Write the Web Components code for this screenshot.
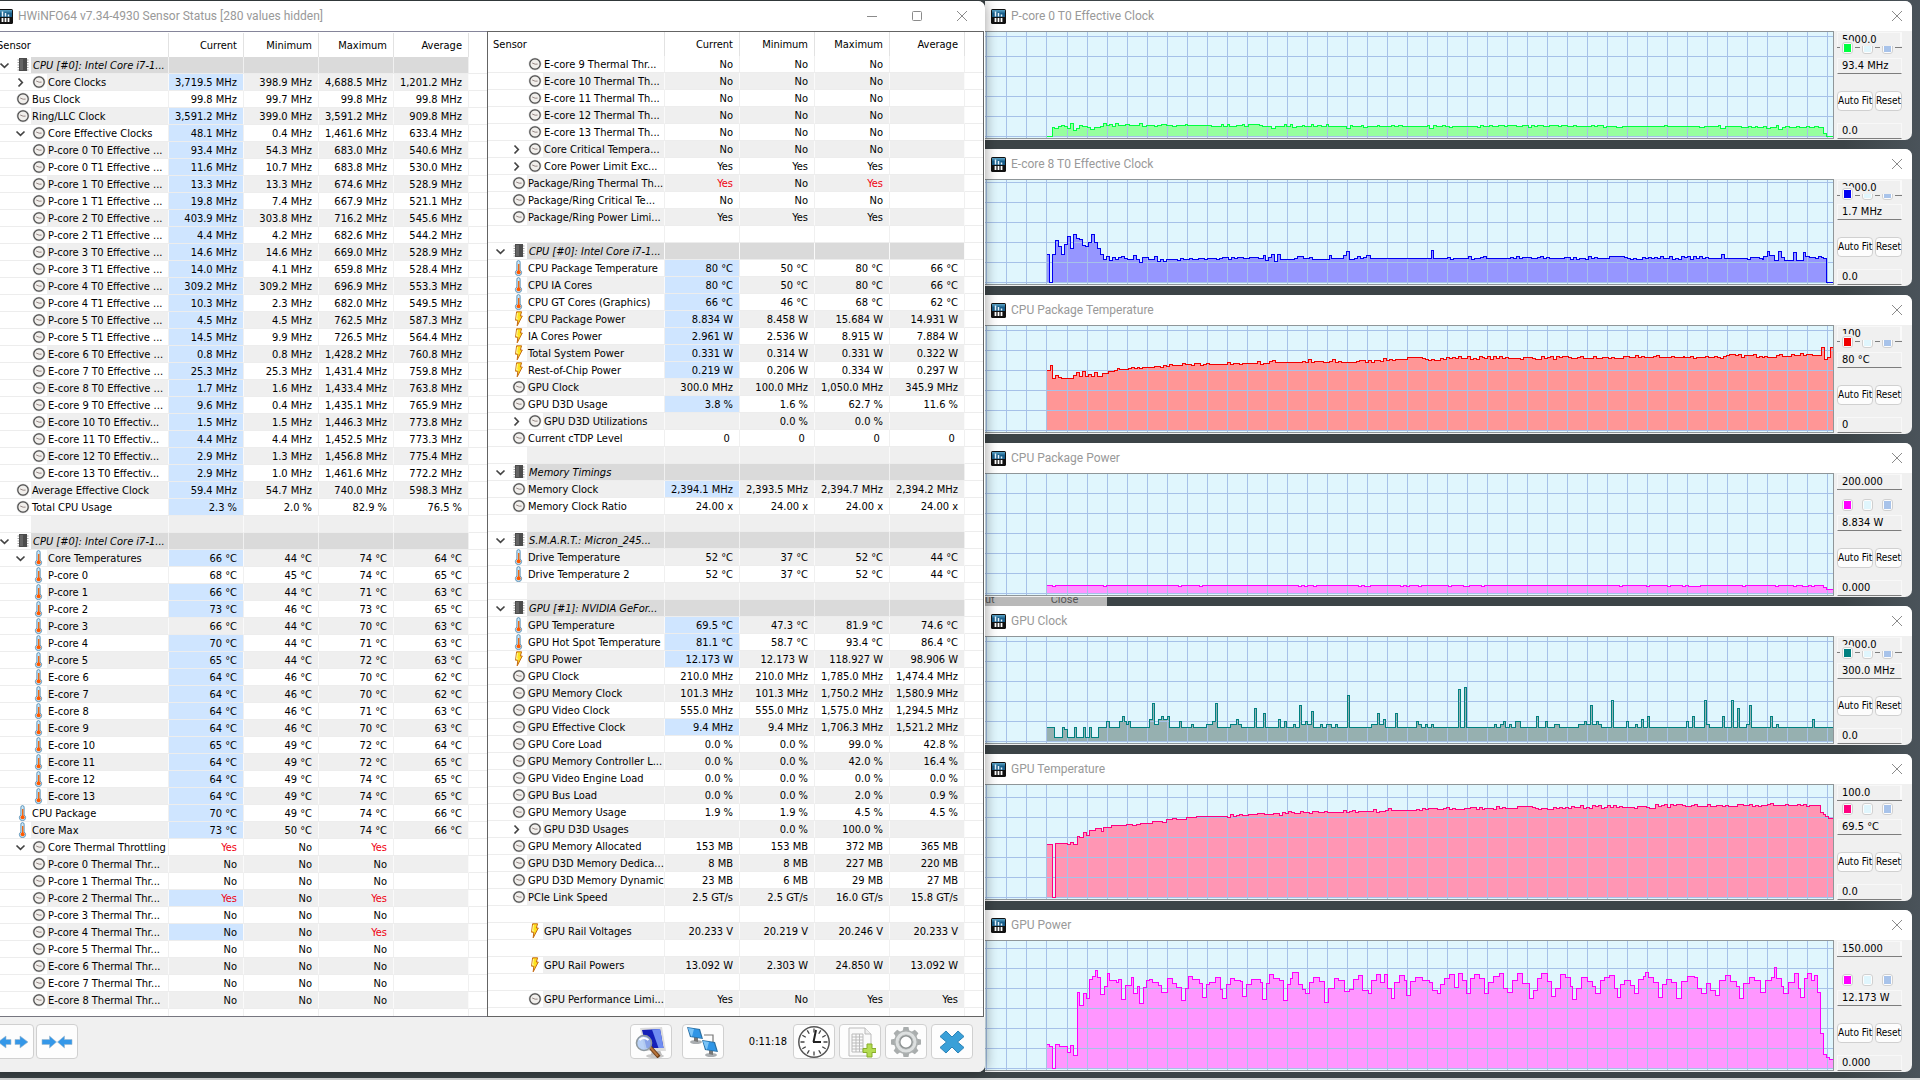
<!DOCTYPE html>
<html lang="en">
<head>
<meta charset="utf-8">
<title>HWiNFO64 Sensor Status</title>
<style>
  body { margin: 0; background: #3d4548; }
</style>
</head>
<body>
<sensor-desktop>
  <app-window slot="main" heading="HWiNFO64 v7.34-4930 Sensor Status [280 values hidden]">
    <sensor-table name="left"></sensor-table>
    <sensor-table name="right" framed></sensor-table>
    <tool-bar slot="footer"></tool-bar>
  </app-window>
  <graph-window heading="P-core 0 T0 Effective Clock" series="pcore" max="5000.0" value="93.4 MHz" min="0.0" plot="108"></graph-window>
  <graph-window heading="E-core 8 T0 Effective Clock" series="ecore" max="2000.0" value="1.7 MHz" min="0.0" plot="106"></graph-window>
  <graph-window heading="CPU Package Temperature" series="cputemp" max="100" value="80 °C" min="0" plot="108"></graph-window>
  <graph-window heading="CPU Package Power" series="cpupower" max="200.000" value="8.834 W" min="0.000" plot="123"></graph-window>
  <peek-strip></peek-strip>
  <graph-window heading="GPU Clock" series="gpuclock" max="2000.0" value="300.0 MHz" min="0.0" plot="108"></graph-window>
  <graph-window heading="GPU Temperature" series="gputemp" max="100.0" value="69.5 °C" min="0.0" plot="116"></graph-window>
  <graph-window heading="GPU Power" series="gpupower" max="150.000" value="12.173 W" min="0.000" plot="131"></graph-window>
</sensor-desktop>

<script>
const UI_FONT = '"DejaVu Sans Condensed", Tahoma, "Noto Sans", sans-serif';
const TITLE_FONT = 'Roboto, "Segoe UI", "Open Sans", sans-serif';

/* ---------- small drawings ---------- */
const ICONS = {
  c: `<svg viewBox="0 0 16 16" width="16" height="16"><circle cx="8" cy="8" r="6.3" fill="#c9c9c9"/><circle cx="8" cy="8" r="5.2" fill="#f1efec" stroke="#4c4c4c" stroke-width="1.2"/><path d="M5.200 7l3 1.200 2.400-.1" fill="none" stroke="#8b7b78" stroke-width=".9"/></svg>`,
  t: `<svg viewBox="0 0 16 16" width="16" height="16"><path d="M5.9 2.2Q5.9.6 7.5.6T9.1 2.2V10q1.5 1 1.5 2.5a3.1 3.1 0 0 1-6.2 0Q4.4 11 5.9 10z" fill="#cfe8f8" stroke="#5b93b8"/><path d="M7 4h1.4v7H7z" fill="#f26a13"/><circle cx="7.6" cy="12.2" r="2" fill="#ff5a00"/></svg>`,
  p: `<svg viewBox="0 0 16 16" width="16" height="16"><path d="M5.6.8h5L9.3 5h2L6.2 14.8l.6-5.6H4.6z" fill="#ffe11c" stroke="#c56a16" stroke-width="1"/><path d="M6.4 2l-.8 6h1.6" fill="none" stroke="#fff8a8"/></svg>`,
  g: `<svg viewBox="0 0 16 16" width="16" height="16"><path d="M2.500 3h11M2.500 5.500h11M2.500 8h11M2.500 10.500h11M2.500 13h11" stroke="#a5a5a5"/><path d="M4 1h8v13H4z" fill="#4c4c4c"/><path d="M5 2h3v11H5z" fill="#656565"/></svg>`,
  down: `<svg viewBox="0 0 21 16" width="21" height="16"><path d="M6.500 6.500l4 3.800 4-3.800" fill="none" stroke="#444" stroke-width="1.700"/></svg>`,
  right: `<svg viewBox="0 0 21 16" width="21" height="16"><path d="M8.500 4.500l3.800 4-3.800 4" fill="none" stroke="#444" stroke-width="1.700"/></svg>`
};
const LOGO = `<svg viewBox="0 0 15 15" width="15" height="15"><defs><linearGradient id="a" x2="0" y2="1"><stop offset="0" stop-color="#5ba5c8"/><stop offset=".5" stop-color="#1a5f8b"/></linearGradient></defs><rect width="15" height="15" rx="1.500" fill="#111"/><path d="M1 1h13v7H1z" fill="url(#a)"/><path d="M4.500 2.500v5M7.500 4v3.500M10.500 5.500v2" stroke="#e9f6ff" stroke-width="1.500"/><path d="M4.500 9v4M7.500 9v4M10.500 9v4" stroke="#fff" stroke-width="1.800"/></svg>`;

const DIALS = Array.from({ length: 12 }, (_, i) => `<path d="M16 2.500v4" transform="rotate(${i * 30} 16 16)" stroke="#444" stroke-width="1.300"/>`).join('');
const TEETH = Array.from({ length: 8 }, (_, i) => `<path d="M12.500 6l1-5h5l1 5z" transform="rotate(${i * 45} 16 16)" fill="#a9adad"/>`).join('');
const screen = (x, y) => `<g transform="translate(${x} ${y})"><ellipse cx="9" cy="16" rx="6" ry="2" fill="#a9adb0"/><path d="M7 11l4 1v4l-4-1z" fill="#777"/><path d="M0 1l13 2 3 10-13-2z" fill="#2a6d9f"/><path d="M1 2l11 1.800 2.600 8.200L4 10.200z" fill="#2f95e6"/><path d="M1 2l6 1-2 7.500L4 10.200z" fill="#79c3f7"/></g>`;
const TOOLS = {
  expand: `<path d="M1 16l8-6v3.500h5v5H9V22z M31 16l-8-6v3.500h-5v5h5V22z" fill="#3497e8" stroke="#9fb9cc" stroke-width=".6"/>`,
  shrink: `<path d="M15.500 16l-7-6v3.500H1v5h7.500V22z M16.500 16l7-6v3.500H31v5h-7.500V22z" fill="#3497e8" stroke="#9fb9cc" stroke-width=".6"/>`,
  inspect: `<ellipse cx="20" cy="30" rx="9" ry="2" fill="#c8c8c8"/><path d="M17 24h8l2 5H16z" fill="#bbb"/><path d="M5 2l22-1 4 24-21 0z" fill="#dcdcdc"/><path d="M7 4l18-1 3.500 19-17 0z" fill="#1420b8"/><path d="M17 3.500l8-.5 3.500 19-5 0z" fill="#6f8df2"/><path d="M15 21l9 10" stroke="#6d3d16" stroke-width="4"/><path d="M15 21l8 9" stroke="#b8743a" stroke-width="2"/><circle cx="9" cy="17" r="7.500" fill="#a7c6f4" fill-opacity=".8" stroke="#8f999f" stroke-width="1.600"/><path d="M4.500 14q4-4 9 0" fill="none" stroke="#fff" stroke-width="2"/>`,
  network: `<path d="M17 9h9v8" fill="none" stroke="#777" stroke-width="1.200"/>${screen(0, 0)}${screen(15, 13)}`,
  clock: `<circle cx="16" cy="16" r="15.200" fill="#fff" stroke="#555" stroke-width="1.500"/>${DIALS}<path d="M15.500 16L18 4M15 16h8" stroke="#222" stroke-width="2"/>`,
  report: `<path d="M5 2h16l6 6v22H5z" fill="#fafafa" stroke="#bbb"/><path d="M21 2v6h6" fill="#eee" stroke="#bbb"/><path d="M8 8h11v18H8zM8 11h11M8 14h11M8 17h11M8 20h11M8 23h11M12 8v18M15.500 8v18" fill="none" stroke="#bbb"/><path d="M23 18h5v4.500h4v4h-4V31h-5v-4.500h-4v-4h4z" fill="#b4dc52" stroke="#87ad2b"/>`,
  settings: `${TEETH}<circle cx="16" cy="16" r="9.500" fill="none" stroke="#adb1b1" stroke-width="5"/><circle cx="16" cy="16" r="9" fill="none" stroke="#dde0e0" stroke-width="3"/><circle cx="16" cy="16" r="6.200" fill="#fff" stroke="#8f9494" stroke-width="1.500"/>`,
  close: `<path d="M10 5l6 6 6-6 6 5.500-6.500 5.500 6.500 5.500-6 5.500-6-6-6 6-6-5.500 6.500-5.500L4 10.500z" fill="#3aa0d8" stroke="#2a83b8"/>`
};

/* ---------- sensor readings ----------
   level + icon + arrow + change mark | name | current | minimum | maximum | average */
const READINGS = {
left: `0gv-|CPU [#0]: Intel Core i7-1...||||
2c>*|Core Clocks|3,719.5 MHz|398.9 MHz|4,688.5 MHz|1,201.2 MHz
1c--|Bus Clock|99.8 MHz|99.7 MHz|99.8 MHz|99.8 MHz
1c-*|Ring/LLC Clock|3,591.2 MHz|399.0 MHz|3,591.2 MHz|909.8 MHz
2cv*|Core Effective Clocks|48.1 MHz|0.4 MHz|1,461.6 MHz|633.4 MHz
2c-*|P-core 0 T0 Effective ...|93.4 MHz|54.3 MHz|683.0 MHz|540.6 MHz
2c-*|P-core 0 T1 Effective ...|11.6 MHz|10.7 MHz|683.8 MHz|530.0 MHz
2c-*|P-core 1 T0 Effective ...|13.3 MHz|13.3 MHz|674.6 MHz|528.9 MHz
2c-*|P-core 1 T1 Effective ...|19.8 MHz|7.4 MHz|667.9 MHz|521.1 MHz
2c-*|P-core 2 T0 Effective ...|403.9 MHz|303.8 MHz|716.2 MHz|545.6 MHz
2c-*|P-core 2 T1 Effective ...|4.4 MHz|4.2 MHz|682.6 MHz|544.2 MHz
2c-*|P-core 3 T0 Effective ...|14.6 MHz|14.6 MHz|669.0 MHz|528.9 MHz
2c-*|P-core 3 T1 Effective ...|14.0 MHz|4.1 MHz|659.8 MHz|528.4 MHz
2c-*|P-core 4 T0 Effective ...|309.2 MHz|309.2 MHz|696.9 MHz|553.3 MHz
2c-*|P-core 4 T1 Effective ...|10.3 MHz|2.3 MHz|682.0 MHz|549.5 MHz
2c-*|P-core 5 T0 Effective ...|4.5 MHz|4.5 MHz|762.5 MHz|587.3 MHz
2c-*|P-core 5 T1 Effective ...|14.5 MHz|9.9 MHz|726.5 MHz|564.4 MHz
2c-*|E-core 6 T0 Effective ...|0.8 MHz|0.8 MHz|1,428.2 MHz|760.8 MHz
2c-*|E-core 7 T0 Effective ...|25.3 MHz|25.3 MHz|1,431.4 MHz|759.8 MHz
2c-*|E-core 8 T0 Effective ...|1.7 MHz|1.6 MHz|1,433.4 MHz|763.8 MHz
2c-*|E-core 9 T0 Effective ...|9.6 MHz|0.4 MHz|1,435.1 MHz|765.9 MHz
2c-*|E-core 10 T0 Effectiv...|1.5 MHz|1.5 MHz|1,446.3 MHz|773.8 MHz
2c-*|E-core 11 T0 Effectiv...|4.4 MHz|4.4 MHz|1,452.5 MHz|773.3 MHz
2c-*|E-core 12 T0 Effectiv...|2.9 MHz|1.3 MHz|1,456.8 MHz|775.4 MHz
2c-*|E-core 13 T0 Effectiv...|2.9 MHz|1.0 MHz|1,461.6 MHz|772.2 MHz
1c-*|Average Effective Clock|59.4 MHz|54.7 MHz|740.0 MHz|598.3 MHz
1c-*|Total CPU Usage|2.3 %|2.0 %|82.9 %|76.5 %

0gv-|CPU [#0]: Intel Core i7-1...||||
2tv*|Core Temperatures|66 °C|44 °C|74 °C|64 °C
2t--|P-core 0|68 °C|45 °C|74 °C|65 °C
2t-*|P-core 1|66 °C|44 °C|71 °C|63 °C
2t-*|P-core 2|73 °C|46 °C|73 °C|65 °C
2t--|P-core 3|66 °C|44 °C|70 °C|63 °C
2t-*|P-core 4|70 °C|44 °C|71 °C|63 °C
2t-*|P-core 5|65 °C|44 °C|72 °C|63 °C
2t-*|E-core 6|64 °C|46 °C|70 °C|62 °C
2t-*|E-core 7|64 °C|46 °C|70 °C|62 °C
2t-*|E-core 8|64 °C|46 °C|71 °C|63 °C
2t-*|E-core 9|64 °C|46 °C|70 °C|63 °C
2t-*|E-core 10|65 °C|49 °C|72 °C|64 °C
2t-*|E-core 11|64 °C|49 °C|72 °C|65 °C
2t-*|E-core 12|64 °C|49 °C|74 °C|65 °C
2t-*|E-core 13|64 °C|49 °C|74 °C|65 °C
1t-*|CPU Package|70 °C|49 °C|74 °C|66 °C
1t-*|Core Max|73 °C|50 °C|74 °C|66 °C
2cv-|Core Thermal Throttling|!Yes|No|!Yes|
2c--|P-core 0 Thermal Thr...|No|No|No|
2c--|P-core 1 Thermal Thr...|No|No|No|
2c-*|P-core 2 Thermal Thr...|!Yes|No|!Yes|
2c--|P-core 3 Thermal Thr...|No|No|No|
2c-*|P-core 4 Thermal Thr...|No|No|!Yes|
2c--|P-core 5 Thermal Thr...|No|No|No|
2c--|E-core 6 Thermal Thr...|No|No|No|
2c--|E-core 7 Thermal Thr...|No|No|No|
2c--|E-core 8 Thermal Thr...|No|No|No|`,
right: `2c--|E-core 9 Thermal Thr...|No|No|No|
2c--|E-core 10 Thermal Th...|No|No|No|
2c--|E-core 11 Thermal Th...|No|No|No|
2c--|E-core 12 Thermal Th...|No|No|No|
2c--|E-core 13 Thermal Th...|No|No|No|
2c>-|Core Critical Tempera...|No|No|No|
2c>-|Core Power Limit Exc...|Yes|Yes|Yes|
1c--|Package/Ring Thermal Th...|!Yes|No|!Yes|
1c--|Package/Ring Critical Te...|No|No|No|
1c--|Package/Ring Power Limi...|Yes|Yes|Yes|

0gv-|CPU [#0]: Intel Core i7-1...||||
1t-*|CPU Package Temperature|80 °C|50 °C|80 °C|66 °C
1t-*|CPU IA Cores|80 °C|50 °C|80 °C|66 °C
1t-*|CPU GT Cores (Graphics)|66 °C|46 °C|68 °C|62 °C
1p-*|CPU Package Power|8.834 W|8.458 W|15.684 W|14.931 W
1p-*|IA Cores Power|2.961 W|2.536 W|8.915 W|7.884 W
1p-*|Total System Power|0.331 W|0.314 W|0.331 W|0.322 W
1p-*|Rest-of-Chip Power|0.219 W|0.206 W|0.334 W|0.297 W
1c--|GPU Clock|300.0 MHz|100.0 MHz|1,050.0 MHz|345.9 MHz
1c-*|GPU D3D Usage|3.8 %|1.6 %|62.7 %|11.6 %
2c>-|GPU D3D Utilizations||0.0 %|0.0 %|
1c--|Current cTDP Level|0 |0 |0 |0 

0gv-|Memory Timings||||
1c-*|Memory Clock|2,394.1 MHz|2,393.5 MHz|2,394.7 MHz|2,394.2 MHz
1c--|Memory Clock Ratio|24.00 x|24.00 x|24.00 x|24.00 x

0gv-|S.M.A.R.T.: Micron_245...||||
1t--|Drive Temperature|52 °C|37 °C|52 °C|44 °C
1t--|Drive Temperature 2|52 °C|37 °C|52 °C|44 °C

0gv-|GPU [#1]: NVIDIA GeFor...||||
1t-*|GPU Temperature|69.5 °C|47.3 °C|81.9 °C|74.6 °C
1t-*|GPU Hot Spot Temperature|81.1 °C|58.7 °C|93.4 °C|86.4 °C
1p-*|GPU Power|12.173 W|12.173 W|118.927 W|98.906 W
1c--|GPU Clock|210.0 MHz|210.0 MHz|1,785.0 MHz|1,474.4 MHz
1c--|GPU Memory Clock|101.3 MHz|101.3 MHz|1,750.2 MHz|1,580.9 MHz
1c--|GPU Video Clock|555.0 MHz|555.0 MHz|1,575.0 MHz|1,294.5 MHz
1c-*|GPU Effective Clock|9.4 MHz|9.4 MHz|1,706.3 MHz|1,521.2 MHz
1c--|GPU Core Load|0.0 %|0.0 %|99.0 %|42.8 %
1c--|GPU Memory Controller L...|0.0 %|0.0 %|42.0 %|16.4 %
1c--|GPU Video Engine Load|0.0 %|0.0 %|0.0 %|0.0 %
1c--|GPU Bus Load|0.0 %|0.0 %|2.0 %|0.9 %
1c--|GPU Memory Usage|1.9 %|1.9 %|4.5 %|4.5 %
2c>-|GPU D3D Usages||0.0 %|100.0 %|
1c--|GPU Memory Allocated|153 MB|153 MB|372 MB|365 MB
1c--|GPU D3D Memory Dedica...|8 MB|8 MB|227 MB|220 MB
1c--|GPU D3D Memory Dynamic|23 MB|6 MB|29 MB|27 MB
1c--|PCIe Link Speed|2.5 GT/s|2.5 GT/s|16.0 GT/s|15.8 GT/s

2p--|GPU Rail Voltages|20.233 V|20.219 V|20.246 V|20.233 V

2p--|GPU Rail Powers|13.092 W|2.303 W|24.850 W|13.092 W

2c--|GPU Performance Limi...|Yes|No|Yes|Yes`
};

/* ---------- graph histories: x:height steps, ~x:height:swing marks a noisy trend ---------- */
const HISTORY = {
  pcore: { line: '#00ff40', fill: '#96ff9f', data: '62:0 68:9 70:8 74:10 77:11 80:10 83:8 86:13 89:6 92:8 95:11 98:10 103:9 106:7 110:9 116:10 119:13 122:11 125:12 128:10 131:13 134:11 141:12 145:11 155:13 158:10 162:11 170:10 173:11 177:12 182:11 188:10 192:11 201:12 203:11 227:10 237:12 239:10 243:12 245:10 252:11 258:12 260:10 264:12 275:11 278:10 287:8 291:10 300:12 302:10 306:12 308:9 312:10 318:11 320:10 327:12 329:10 333:11 337:10 342:12 344:10 362:8 366:11 368:10 377:11 379:9 383:10 393:11 395:10 407:11 410:10 414:11 418:10 443:11 445:8 449:11 452:10 458:11 461:10 465:9 468:10 ~490:10:1 ~625:10:1 632:9 638:10 680:11 683:10 715:9 720:10 734:11 736:8 741:10 757:9 764:10 767:9 771:10 773:9 779:10 782:8 786:9 792:11 794:7 798:9 801:10 805:9 812:10 815:9 822:10 825:9 830:10 834:9 839:3 842:0' },
  ecore: { line: '#0000f0', fill: '#9696ff', data: '62:28 65:0 68:28 71:42 74:36 77:28 80:38 83:46 86:34 89:48 92:44 95:43 98:37 101:36 104:40 107:48 110:40 113:34 116:28 119:23 122:26 125:22 128:25 131:23 134:25 137:26 140:24 143:23 149:27 152:23 155:20 158:25 164:23 170:26 173:21 176:23 179:21 182:23 ~190:23:1 ~276:24:2 279:27 281:22 284:25 287:28 290:21 293:28 296:23 ~310:24:2 ~343:23:2 345:27 347:24 359:27 362:31 365:23 ~370:24:2 382:27 386:24 ~445:24:2 447:32 449:24 ~460:24:2 ~735:24:2 737:28 740:24 ~760:24:1 779:26 783:31 785:27 790:22 794:31 797:25 800:22 809:30 812:22 819:30 821:26 825:25 ~828:25:1 839:24 842:0' },
  cputemp: { line: '#f00000', fill: '#ff9696', data: '62:60 66:65 68:52 71:55 74:53 77:52 89:55 92:58 95:54 98:59 101:54 104:56 107:54 110:58 113:54 ~118:57:1 ~135:61:2 ~155:62:2 ~195:65:2 ~240:66:2 ~300:68:3 ~360:68:2 ~420:71:2 ~500:72:2 ~600:72:2 ~700:73:2 ~780:74:2 ~834:75:1 837:83 840:71 843:73 846:83' },
  cpupower: { line: '#ff00ff', fill: '#ff96ff', data: '62:8 ~65:8:0 ~835:8:0 839:6 842:4' },
  gpuclock: { line: '#008080', fill: '#96b0b0', data: '62:14 70:4 78:14 80:12 83:4 90:14 92:4 99:14 101:4 105:14 107:4 114:14 122:20 125:14 135:20 138:25 140:20 142:17 144:20 146:14 165:22 168:38 170:17 174:22 177:25 179:22 183:25 185:14 195:20 197:14 207:17 209:14 222:17 228:20 231:38 233:14 246:17 252:22 254:17 257:14 270:33 272:14 279:28 281:14 294:22 296:14 300:20 302:14 309:17 311:14 315:36 317:17 321:20 323:17 327:30 329:14 336:17 338:14 342:17 347:14 351:17 353:14 363:46 365:14 387:17 393:28 395:17 399:22 401:14 411:28 413:14 432:20 434:17 437:14 441:17 443:14 447:17 449:14 474:52 476:14 480:54 482:14 510:17 512:14 516:17 519:20 521:14 525:17 527:14 531:20 536:14 552:25 554:14 561:20 563:14 570:17 575:14 594:17 600:20 602:17 606:36 608:17 612:20 614:17 617:14 627:41 629:14 642:20 644:14 651:17 653:14 657:22 659:14 663:25 665:14 702:20 704:14 708:25 710:14 720:41 722:17 725:14 738:25 740:14 747:41 749:14 753:33 755:14 762:17 765:36 767:14 786:25 788:14 792:17 794:14 828:22 830:14' },
  gputemp: { line: '#ff0080', fill: '#ff96b4', data: '62:53 68:0 71:54 83:53 86:55 89:53 93:61 95:60 99:65 102:62 105:67 111:69 117:66 119:70 127:72 142:73 148:72 152:73 156:74 168:76 178:75 182:78 188:79 192:78 202:80 212:81 ~240:81:2 ~280:83:2 ~350:85:2 ~420:87:2 ~500:89:2 ~560:89:2 ~620:90:2 ~720:91:2 ~833:92:2 836:85 839:83 841:81 844:79' },
  gpupower: { line: '#ff00ff', fill: '#ff96ff', data: '62:24 65:22 68:0 71:24 75:22 83:16 86:23 89:13 93:76 95:63 99:75 102:70 105:89 108:92 111:98 113:91 116:74 120:82 123:95 125:88 132:86 134:89 137:69 141:83 147:91 149:75 153:82 155:65 159:81 162:88 165:89 168:86 174:83 177:76 183:90 188:85 192:81 197:68 201:80 204:92 208:89 215:85 218:71 222:84 225:86 231:91 236:79 238:70 242:84 246:90 250:88 256:87 258:72 262:84 267:89 276:86 278:69 282:85 285:94 289:90 295:88 299:68 303:84 306:90 308:96 314:84 318:79 321:75 325:86 329:91 335:87 340:66 344:80 350:90 354:88 360:77 365:79 369:89 374:93 378:78 384:75 387:88 392:94 396:86 400:94 403:80 407:70 410:86 415:93 420:88 422:73 426:87 431:91 438:88 445:86 448:78 453:75 456:84 460:90 465:94 470:81 474:95 478:88 482:75 486:90 490:94 495:90 500:75 504:86 509:92 515:95 519:80 523:76 528:88 533:95 538:85 545:70 549:78 553:90 557:95 563:87 567:72 571:80 576:94 581:91 586:82 588:69 592:80 597:91 603:87 608:82 611:75 616:88 620:91 625:93 630:80 633:71 636:84 640:88 646:83 650:75 654:89 659:92 661:96 664:91 669:86 674:71 678:84 682:89 687:86 692:70 697:87 703:92 710:91 713:80 717:75 722:85 726:78 731:73 735:88 741:93 746:87 752:82 755:70 759:85 765:91 770:88 776:76 781:88 787:91 790:101 792:90 797:82 799:75 804:86 810:95 814:80 816:71 820:90 823:95 827:88 830:93 833:76 836:35 839:14 842:11 845:9' }
};

/* Expand the compact notation into [x, height] steps. */
function expandHistory(text) {
  let seed = 7;
  const random = () => (seed = (seed * 16807) % 2147483647) / 2147483647;
  const steps = [];
  const tokens = text.split(' ').map(t => ({ noisy: t[0] === '~', v: t.replace('~', '').split(':').map(Number) }));
  tokens.forEach((token, i) => {
    const [x, h, swing] = token.v;
    steps.push([x, h]);
    const next = tokens[i + 1];
    if (!token.noisy || !next) return;
    const target = next.noisy ? next.v[1] : h;
    for (let px = x + 3; px < next.v[0]; px += 3) {
      const trend = h + (target - h) * (px - x) / (next.v[0] - x);
      const r = random();
      const jitter = r > 0.88 ? swing : r > 0.6 ? Math.min(1, swing) : r < 0.12 ? -1 : 0;
      steps.push([px, Math.round(trend + jitter)]);
    }
  });
  return steps;
}

function define(name, css, render) {
  customElements.define(name, class extends HTMLElement {
    connectedCallback() {
      if (this.shadowRoot) return;
      const root = this.attachShadow({ mode: 'open' });
      root.innerHTML = `<style>:host,*{box-sizing:border-box}${css}</style>${render(this)}`;
    }
  });
}

define('sensor-desktop', `
  :host { display: flex; flex-direction: column; min-height: 100vh; overflow: hidden; font: 11px/16px ${UI_FONT}; color: #000; }
  .desk { flex: 1; display: grid; grid-template-columns: 985fr 935fr; align-items: start; padding-top: 1px; background: linear-gradient(90deg, #3c4447 96%, #4a535a); }
  .main { margin-left: -8px; min-width: 0; position: relative; z-index: 1; }
  .graphs { padding-right: 8px; min-width: 0; }
  ::slotted(graph-window:not(:nth-child(2)):not(:nth-child(7))) { margin-top: 9px; }
  .taskline { height: 2px; background: #d8dada; }
`, () => `<div class="desk"><div class="main"><slot name="main"></slot></div><div class="graphs"><slot></slot></div></div><div class="taskline"></div>`);

define('title-bar', `
  :host { display: flex; align-items: center; height: 30px; padding: 0 7px 0 6px; gap: 5px; background: #fff; }
  h1 { flex: 1; margin: 0; font: 400 12px/18px ${TITLE_FONT}; color: #999; white-space: nowrap; }
  svg { display: block; }
  .controls { display: flex; gap: 29px; }
  button { width: 16px; height: 16px; padding: 0; border: 0; background: none; }
  button svg { fill: none; stroke: #8b8b8b; }
`, el => {
  const extra = el.hasAttribute('resizable')
    ? `<button aria-label="Minimize"><svg width="16" height="16"><path d="M3 8.500h10"/></svg></button><button aria-label="Maximize"><svg width="16" height="16"><rect x="3.500" y="3.500" width="9" height="9" rx="1"/></svg></button>` : '';
  return `${LOGO}<h1>${el.getAttribute('heading')}</h1><div class="controls">${extra}<button aria-label="Close"><svg width="16" height="16"><path d="M3 3l10 10M13 3L3 13"/></svg></button></div>`;
});

define('app-window', `
  :host { display: block; background: #f0f0f0; border-radius: 0 7px 7px 0; overflow: hidden; box-shadow: 0 0 14px rgba(0,0,0,.4); }
  title-bar { padding: 0 15px 0 6px; }
  .panes { display: grid; grid-template-columns: 495fr 498fr; background: #fff; }
`, el => `<title-bar resizable heading="${el.getAttribute('heading')}"></title-bar><div class="panes"><slot></slot></div><slot name="footer"></slot>`);

define('sensor-table', `
  :host { display: block; min-width: 0; height: 986px; overflow: hidden; border-top: 1px solid #85859a; border-bottom: 1px solid #76767f; padding-top: 1px; background: #fff; }
  :host([framed]) { border: 1px solid #646464; margin-right: 1px; padding-top: 0; }
  table { width: 100%; table-layout: fixed; border-collapse: separate; border-spacing: 0; line-height: 14px; }
  .wide { width: 177px; } .col { width: 75px; }
  th { height: 24px; padding: 2px 6px 0 5px; font-weight: 400; text-align: right; border-right: 1px solid #e2e2e2; }
  th:first-child { text-align: left; }
  th:last-child, td:last-child { border-right: 0; }
  td { height: 17px; padding: 2px 6px 0 0; text-align: right; white-space: pre; border-right: 1px solid #f0f0f0; border-bottom: 1px solid #ededed; }
  td:first-child { padding: 0; text-align: left; }
  .odd td:not(:first-child):not(:last-child), .odd .name { background: #efefef; }
  .odd td { border-right-color: #fafafa; }
  tr.group td:not(:first-child):not(:last-child), tr.group .name { background: #dadada; }
  tr.group .name { font-style: italic; padding-left: 2px; }
  tr td.changed.changed.changed { background: #cfe5ff; }
  .red { color: #f00010; }
  .cell { display: flex; height: 16px; overflow: hidden; }
  .lead { width: 23px; flex: none; display: flex; justify-content: flex-end; }
  .deep .lead { width: 39px; }
  .icon { width: 16px; flex: none; }
  .name { flex: 1; min-width: 0; overflow: hidden; padding: 2px 0 0 1px; }
  svg { display: block; }
`, el => {
  const rows = READINGS[el.getAttribute('name')].split('\n').map((line, i) => {
    const [code, name = '', ...values] = line.split('|');
    const [level, icon, arrow, mark] = code;
    const cls = [i % 2 ? 'odd' : '', level === '0' ? 'group' : '', level === '2' ? 'deep' : ''].join(' ').trim();
    const chevron = arrow === 'v' ? ICONS.down : arrow === '>' ? ICONS.right : '';
    const cells = [0, 1, 2, 3].map(n => {
      const v = values[n] || '';
      const c = [n === 0 && mark === '*' ? 'changed' : '', v[0] === '!' ? 'red' : ''].join(' ').trim();
      return `<td${c ? ` class="${c}"` : ''}>${v.replace('!', '')}</td>`;
    }).join('');
    return `<tr class="${cls}"><td><div class="cell"><span class="lead">${chevron}</span><span class="icon">${ICONS[icon] || ''}</span><span class="name">${name}</span></div></td>${cells}<td></td></tr>`;
  }).join('');
  return `<table><colgroup><col class="wide"><col class="col"><col class="col"><col class="col"><col class="col"><col></colgroup>
    <thead><tr><th>Sensor</th><th>Current</th><th>Minimum</th><th>Maximum</th><th>Average</th><th></th></tr></thead><tbody>${rows}<tr><td></td><td></td><td></td><td></td><td></td><td></td></tr></tbody></table>`;
});

define('tool-button', `
  :host { display: block; }
  button { display: block; width: 42px; height: 35px; padding: 0 4px; border: 1px solid #d0d0d0; border-radius: 4px; background: #fdfdfd; }
  svg { display: block; }
`, el => `<button aria-label="${el.getAttribute('icon')}"><svg viewBox="0 0 32 32" width="32" height="32">${TOOLS[el.getAttribute('icon')]}</svg></button>`);

define('tool-bar', `
  :host { display: flex; align-items: flex-start; justify-content: space-between; height: 55px; padding: 7px 12px 0 0; background: #f0f0f0; }
  div { display: flex; align-items: center; gap: 4px; }
  .sizing { gap: 2px; }
  .pair { display: flex; gap: 10px; margin-right: 21px; }
  time { margin-right: 2px; }
`, () => `<div class="sizing"><tool-button icon="expand"></tool-button><tool-button icon="shrink"></tool-button></div>
  <div><span class="pair"><tool-button icon="inspect"></tool-button><tool-button icon="network"></tool-button></span><time>0:11:18</time>
  <tool-button icon="clock"></tool-button><tool-button icon="report"></tool-button><tool-button icon="settings"></tool-button><tool-button icon="close"></tool-button></div>`);

define('history-plot', `
  :host { display: block; border-top: 1px solid #8f9699; border-right: 1px solid #8f9699; border-bottom: 1px solid #8f9699; background: #e0f6fd; overflow: hidden; }
  svg { display: block; width: 100%; height: 100%; shape-rendering: crispEdges; }
`, el => {
  const { line, fill, data } = HISTORY[el.getAttribute('series')];
  const height = Number(el.getAttribute('height')) - 2;
  const base = height - 1;
  const steps = expandHistory(data);
  let path = `M61.500 ${base - steps[0][1] - 0.5}`;
  steps.forEach(([x, h]) => { path += `H${x - 0.5}V${base - h - 0.5}`; });
  path += 'H848';
  let grid = '';
  [1, 21, 41, 61].forEach(x => { grid += `M${x + 0.5} 0V${height}`; });
  for (let x = 82; x < 848; x += 20) grid += `M${x + 0.5} 0V${height}`;
  for (let y = base; y > 0; y -= 20) grid += `M0 ${y - 0.5}H848`;
  return `<svg viewBox="0 0 848 ${height}" preserveAspectRatio="none"><path d="${path}V${base}H61.500z" fill="${fill}"/><path d="${grid}" stroke="#a6c1e8" fill="none"/><path d="${path}" stroke="${line}" fill="none"/></svg>`;
});

define('graph-window', `
  :host { display: block; background: #f0f0f0; border-radius: 0 7px 7px 0; overflow: hidden; padding-bottom: 1px; }
  .body { display: flex; }
  history-plot { flex: 1; min-width: 0; }
  .side { width: 78px; flex: none; display: flex; flex-direction: column; padding: 1px 10px 0 3px; }
  input { display: block; width: 100%; height: 16px; padding: 0 4px; border: 1px solid #f8f8f8; border-bottom-color: #7d7d7d; background: #f0f0f0; font: inherit; color: #000; }
  .top { flex: none; height: 16px; margin-bottom: -8px; border-bottom: 1px solid #7d7d7d; }
  .top input { position: relative; z-index: 1; height: 14px; border-bottom: 0; border-right: 2px solid #fafafa; }
  .lower { margin-top: auto; }
  .swatches { display: flex; gap: 9px; padding-left: 5px; margin-bottom: 4px; }
  .swatches button { position: relative; width: 11px; height: 12px; padding: 1px; border: 1px solid #d0d0d0; border-radius: 3px; background: #fdfdfd; box-shadow: 0 0 0 2px #f0f0f0; }
  .swatches button:first-child { z-index: 2; }
  .swatches i { display: block; width: 7px; height: 8px; }
  .actions { display: flex; gap: 2px; margin: 17px -4px 12px 0; }
  .actions button { height: 20px; padding: 0; border: 1px solid #d0d0d0; border-radius: 4px; background: #fdfdfd; font: 10px/16px ${UI_FONT}; color: #000; white-space: nowrap; }
  .fit { width: 36px; } .reset { width: 27px; }
`, el => {
  const get = n => el.getAttribute(n);
  const plot = get('plot');
  return `<title-bar heading="${get('heading')}"></title-bar>
  <div class="body"><history-plot series="${get('series')}" height="${plot}" style="height:${plot}px"></history-plot>
  <div class="side"><div class="top"><input aria-label="Scale maximum" value="${get('max')}"></div>
    <div class="lower"><div class="swatches"><button aria-label="Line colour"><i style="background:${HISTORY[get('series')].line}"></i></button><button aria-label="Background colour"><i style="background:#e0f6fd"></i></button><button aria-label="Grid colour"><i style="background:#a8c3ea"></i></button></div>
    <input aria-label="Current value" readonly value="${get('value')}">
    <div class="actions"><button class="fit">Auto Fit</button><button class="reset">Reset</button></div>
    <input aria-label="Scale minimum" value="${get('min')}"></div></div></div>`;
});

define('peek-strip', `
  :host { display: flex; gap: 56px; width: 122px; height: 9px; overflow: hidden; background: #b9b9b9; color: #555; font: 11px/6px ${TITLE_FONT}; }
`, () => `<span>ut</span><span>Close</span>`);
</script>
</body>
</html>
